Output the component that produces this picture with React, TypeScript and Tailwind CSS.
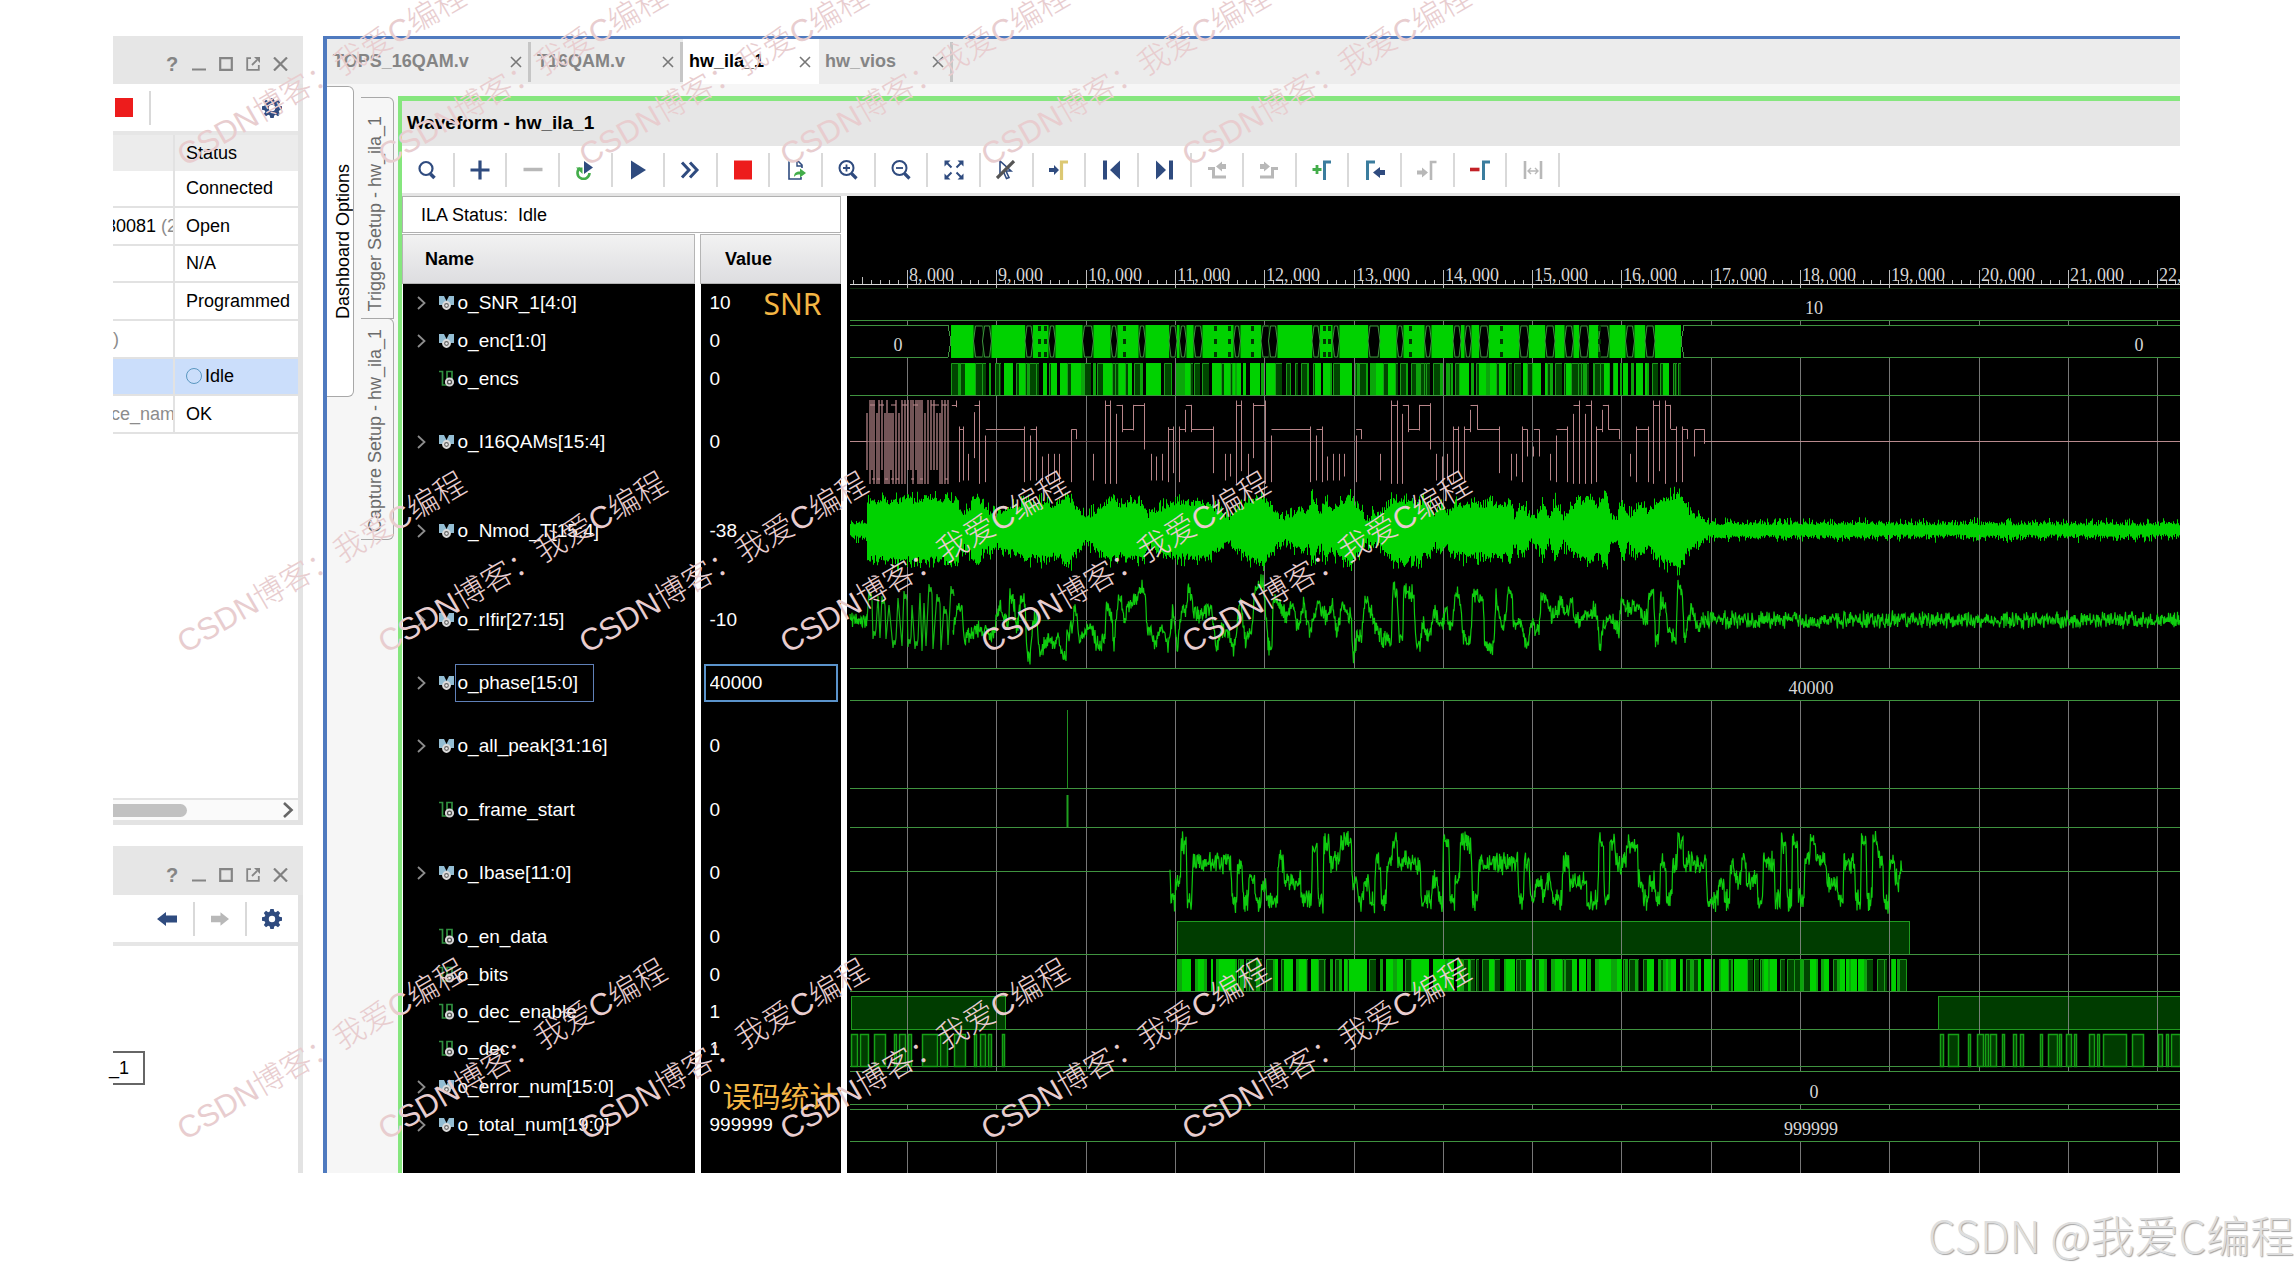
import React from "react";

/* ---------- deterministic noise for the captured samples ---------- */
function makeRandom(seed: number) {
  let s = seed;
  return () => {
    s = (s * 1664525 + 1013904223) % 4294967296;
    return s / 4294967296;
  };
}

type Pt = [number, number];

function sample(points: Pt[], x: number) {
  let i = 0;
  while (i < points.length - 2 && points[i + 1][0] <= x) i++;
  const [x0, y0] = points[i];
  const [x1, y1] = points[i + 1];
  const t = Math.min(1, Math.max(0, (x - x0) / (x1 - x0 || 1)));
  return y0 + (y1 - y0) * t;
}

function noisyTrace(points: Pt[], from: number, to: number, noise: number, seed: number) {
  const r = makeRandom(seed);
  let d = "";
  for (let x = from; x <= to; x += 0.5) {
    const y = sample(points, x) + (r() + r() - 1) * noise;
    d += (d ? "L" : "M") + x + " " + y.toFixed(1);
  }
  return d;
}

const third = (pts: Pt[], ox: number, oy: number): Pt[] => pts.map(([x, y]) => [ox + x / 3, oy + y / 3]);

/* ---------- modulated signal envelope ---------- */
const ENVELOPE: Pt[] = [
  [850, 7], [866, 8], [867, 29], [955, 31], [958, 30], [960, 16], [970, 20], [973, 32], [979, 32], [982, 22], [995, 16], [1010, 22],
  [1028, 30], [1035, 26], [1040, 30], [1050, 25], [1060, 28], [1066, 36], [1075, 24], [1086, 13], [1100, 21], [1110, 32],
  [1118, 26], [1143, 28], [1148, 16], [1160, 22], [1175, 27], [1200, 28], [1222, 19], [1228, 12], [1240, 22], [1250, 30],
  [1265, 31], [1275, 17], [1285, 12], [1295, 16], [1300, 22], [1308, 18], [1312, 32], [1320, 13], [1325, 32], [1330, 20],
  [1350, 34], [1358, 22], [1366, 12], [1380, 16], [1392, 30], [1410, 30], [1430, 25], [1434, 14], [1440, 24], [1447, 16],
  [1452, 24], [1470, 26], [1506, 26], [1510, 32], [1514, 14], [1522, 26], [1530, 12], [1536, 14], [1543, 28], [1549, 12],
  [1555, 28], [1563, 13], [1575, 26], [1588, 32], [1598, 24], [1606, 38], [1610, 14], [1617, 12], [1622, 28], [1628, 14],
  [1640, 26], [1648, 16], [1655, 28], [1668, 32], [1680, 36], [1688, 18], [1700, 13], [1708, 7], [2180, 6],
];

function envelopePath() {
  const r = makeRandom(11);
  const top: string[] = [];
  const bottom: string[] = [];
  const edge = (a: number) => {
    const spike = r() > 0.65 ? r() * (a > 10 ? 9 : 5) : 0;
    return a - (a > 10 ? 4 : 2) + r() * (a > 10 ? 7 : 4) + spike;
  };
  for (let x = 850; x <= 2180; x++) {
    const a = sample(ENVELOPE, x);
    const up = (530 - edge(a)).toFixed(1);
    const down = (530 + edge(a)).toFixed(1);
    top.push(x + " " + up, x + 1 + " " + up);
    bottom.push(x + " " + down, x + 1 + " " + down);
  }
  return "M" + top.join("L") + "L" + bottom.reverse().join("L") + "Z";
}

/* ---------- filtered baseband ---------- */
const FIR_A: Pt[] = [
  [340, 995], [350, 930], [365, 920], [372, 1020], [385, 1010], [395, 990], [420, 985], [440, 1000], [455, 1020], [468, 960],
  [480, 920], [490, 945], [505, 960], [510, 880], [520, 890], [530, 990], [545, 880], [555, 900], [560, 1060], [570, 1070],
  [580, 960], [590, 960], [600, 1070], [612, 1035], [625, 1020], [640, 1040], [655, 1015], [665, 1060], [678, 1080], [682, 1000],
  [695, 980], [705, 910], [720, 1020], [735, 1000], [750, 970], [765, 1020], [780, 1035], [795, 1020], [800, 920], [812, 925],
  [822, 1030], [835, 900], [845, 910], [852, 965], [865, 910], [885, 900], [900, 870], [915, 870], [922, 980], [935, 1000],
  [945, 1030], [960, 980], [975, 1000], [985, 1035], [1000, 925], [1012, 1050], [1025, 930], [1038, 930], [1045, 860], [1060, 930],
  [1075, 950], [1100, 930], [1115, 930], [1130, 1050], [1145, 980], [1160, 990], [1180, 1045], [1190, 1000], [1200, 880],
  [1215, 1020], [1235, 1000], [1245, 860], [1270, 850], [1285, 1040], [1295, 1050], [1300, 880], [1320, 920], [1340, 950],
  [1360, 920], [1375, 990], [1390, 910], [1410, 1000], [1425, 930],
];
const FIR_B: Pt[] = [
  [0, 920], [20, 950], [38, 915], [50, 995], [68, 910], [80, 940], [92, 940], [100, 1070], [110, 1010], [125, 1010], [135, 900],
  [145, 910], [160, 960], [180, 1010], [200, 1020], [214, 1020], [218, 870], [230, 870], [238, 1010], [248, 1000], [252, 870],
  [280, 880], [288, 1020], [300, 1030], [310, 970], [325, 1020], [345, 930], [360, 990], [378, 930], [395, 990], [405, 885],
  [418, 890], [430, 1010], [450, 1030], [458, 890], [488, 880], [494, 1035], [522, 1040], [528, 890], [545, 970], [558, 960],
  [565, 870], [576, 880], [580, 980], [605, 960], [612, 1030], [622, 1040], [635, 970], [658, 1000], [663, 880], [680, 900],
  [690, 940], [705, 945], [722, 905], [738, 950], [755, 900], [770, 970], [785, 950], [800, 940], [828, 930], [840, 1045],
  [850, 980], [865, 950], [880, 960], [898, 1000], [903, 890], [920, 930], [945, 910], [960, 930], [982, 960], [987, 880],
  [1000, 880], [1006, 1020], [1016, 1010], [1022, 900], [1035, 920], [1045, 990], [1068, 1020], [1073, 860], [1086, 860],
  [1092, 1020], [1115, 920], [1135, 990], [1145, 960], [1150, 957],
];

/* rapid swings at the start of the frame */
function firBurstPath() {
  const r = makeRandom(5);
  let d = "M867 620";
  let high = false;
  for (let x = 869; x < 953; x += 2 + Math.floor(r() * 3)) {
    high = !high;
    const y = high ? 584 + r() * 24 : 654 - r() * 18;
    d += `L${x} ${y.toFixed(0)}`;
    if (r() > 0.6) {
      d += `l1 ${high ? 8 : -8}l1 ${high ? -5 : 5}l1 ${high ? 7 : -7}`;
      x += 2;
    }
  }
  return d;
}

/* ---------- demodulated baseband ---------- */
const BASE_A: Pt[] = [
  [90, 574], [92, 660], [104, 663], [106, 605], [121, 603], [124, 490], [138, 490], [142, 665], [155, 665], [158, 545], [272, 547],
  [276, 665], [290, 665], [293, 550], [306, 558], [312, 665], [323, 665], [328, 605], [342, 605], [348, 665], [362, 670],
  [366, 610], [378, 610], [382, 670], [412, 660], [415, 545], [430, 543], [433, 605], [482, 605], [486, 660], [515, 660],
  [518, 485], [531, 490], [535, 660], [549, 665], [552, 485], [566, 490], [570, 547], [598, 543], [602, 488], [634, 485],
  [637, 605], [652, 605], [656, 660], [668, 665], [673, 605], [686, 605], [691, 665], [704, 665], [707, 548], [721, 550],
  [724, 665], [738, 665], [741, 545], [756, 545], [758, 485], [771, 485], [774, 550], [840, 550], [844, 665], [875, 665],
  [878, 600], [891, 600], [895, 665], [908, 665], [910, 480], [927, 485], [930, 665], [943, 665], [947, 600], [958, 600],
  [961, 490], [993, 490], [998, 665], [1013, 665], [1016, 550], [1133, 547], [1137, 665], [1150, 665], [1153, 547],
  [1168, 550], [1171, 665], [1184, 665], [1187, 605],
];
const BASE_B: Pt[] = [
  [2, 245], [10, 300], [17, 245], [27, 240], [30, 300], [53, 300], [56, 185], [69, 185], [71, 245], [111, 245], [114, 305],
  [139, 305], [142, 130], [153, 130], [155, 300], [167, 300], [169, 130], [181, 130], [183, 190], [207, 190], [209, 130],
  [235, 130], [237, 240], [247, 245], [250, 305], [262, 305], [264, 245], [276, 245], [280, 305], [289, 300], [291, 180],
  [303, 185], [306, 300], [318, 300], [320, 190], [330, 190], [332, 125], [345, 125], [347, 190], [401, 185], [403, 300],
  [429, 300], [431, 245], [443, 245], [446, 300], [457, 300], [459, 190], [469, 190], [471, 245], [483, 245], [485, 190],
  [496, 190], [498, 245], [523, 240], [526, 305], [537, 305], [539, 185], [565, 185], [567, 300], [580, 305], [582, 128],
  [594, 130], [596, 300], [607, 300], [609, 128], [621, 130], [623, 300], [637, 300], [639, 180], [650, 180], [652, 130],
  [664, 130], [666, 185], [690, 185], [692, 250], [717, 250], [719, 300], [731, 305], [733, 185], [759, 185], [761, 305],
  [773, 305], [775, 123], [787, 125], [789, 300], [801, 300], [803, 123], [814, 125], [817, 185], [827, 185], [829, 310],
  [841, 310], [843, 185], [854, 185], [858, 240], [867, 245], [869, 190], [873, 214],
];
const BASE: Pt[] = [...third(BASE_A, 1140, 680), ...BASE_B.map(([x, y]): Pt => [1540 + x / 2.412, 800 + y / 3])];

/* ---------- 16QAM symbols ---------- */
type Seg = [number, number, number];
const QAM_V_A: Seg[] = [
  [348, 300, 320], [357, 378, 545], [368, 378, 540], [384, 460, 540], [401, 335, 473], [418, 300, 550], [434, 405, 545],
  [553, 378, 545], [570, 405, 540], [588, 378, 540], [606, 468, 545], [625, 460, 545], [641, 460, 545], [658, 460, 545],
  [692, 388, 545], [709, 388, 416], [760, 460, 540], [795, 300, 550], [811, 300, 550], [828, 340, 550], [847, 313, 395],
  [880, 313, 390], [913, 308, 447], [932, 460, 540], [949, 468, 540], [967, 460, 540], [985, 380, 545], [1000, 378, 518],
  [1018, 378, 545], [1036, 328, 395], [1054, 313, 395], [1120, 378, 518], [1154, 460, 540], [1170, 460, 528], [1189, 300, 550],
  [1204, 300, 512], [1223, 460, 545], [1239, 308, 473], [1276, 300, 550], [1293, 405, 545], [1411, 378, 545], [1428, 405, 540],
];
const QAM_V_B: Seg[] = [
  [7, 378, 545], [22, 468, 540], [40, 460, 540], [56, 460, 540], [73, 460, 528], [107, 405, 545], [124, 388, 416],
  [179, 460, 540], [213, 300, 550], [230, 300, 550], [247, 340, 550], [265, 313, 395], [298, 313, 390], [331, 308, 447],
  [348, 460, 540], [366, 468, 540], [382, 460, 540], [400, 378, 545], [415, 378, 518], [433, 378, 545], [450, 328, 395],
  [472, 313, 388], [538, 378, 518], [572, 460, 540], [588, 460, 528], [607, 378, 545], [622, 388, 468], [639, 438, 468],
  [658, 388, 468], [690, 460, 540], [708, 405, 545], [742, 378, 545], [759, 340, 550], [776, 300, 550], [796, 340, 550],
  [813, 300, 550], [829, 378, 545], [847, 328, 395], [865, 313, 388], [898, 388, 416], [931, 460, 528], [949, 378, 545],
  [984, 378, 545], [1000, 300, 550], [1017, 300, 512], [1035, 300, 550], [1051, 313, 385], [1069, 378, 545], [1085, 378, 545],
  [1102, 388, 416], [1122, 388, 468], [1153, 388, 430],
];
const QAM_H_A: Seg[] = [
  [334, 348, 316], [357, 368, 388], [402, 418, 316], [436, 553, 388], [570, 588, 388], [692, 709, 388], [795, 811, 316],
  [828, 847, 316], [847, 880, 388], [880, 913, 316], [985, 1000, 388], [1018, 1036, 388], [1036, 1054, 316], [1054, 1120, 388],
  [1189, 1204, 316], [1239, 1276, 316], [1293, 1411, 388], [1428, 1447, 388],
];
const QAM_H_B: Seg[] = [
  [107, 124, 388], [213, 230, 316], [247, 265, 316], [265, 298, 388], [298, 331, 316], [400, 415, 388], [433, 450, 388],
  [450, 472, 316], [472, 538, 388], [607, 622, 388], [640, 658, 388], [708, 742, 388], [759, 776, 316], [796, 813, 316],
  [829, 847, 388], [847, 865, 316], [865, 898, 388], [949, 984, 388], [1000, 1017, 316], [1035, 1051, 316], [1051, 1069, 388],
  [1085, 1102, 388], [1122, 1153, 388],
];

function qamPath() {
  let d = "";
  const v = (list: Seg[], ox: number) =>
    list.forEach(([x, a, b]) => (d += `M${Math.round(ox + x / 3)} ${300 + a / 3}V${300 + b / 3}`));
  const h = (list: Seg[], ox: number) =>
    list.forEach(([a, b, y]) => (d += `M${ox + a / 3} ${Math.round(300 + y / 3)}H${ox + b / 3}`));
  v(QAM_V_A, 840);
  v(QAM_V_B, 1320);
  h(QAM_H_A, 840);
  h(QAM_H_B, 1320);
  return d;
}

function burstPath() {
  const r = makeRandom(21);
  let d = "";
  for (let x = 867; x < 951; x += r() > 0.45 ? 2 : 3) {
    const a = r() > 0.3 ? 400 : 413;
    const b = r() > 0.35 ? 484 : 470;
    d += `M${x} ${a}V${b}`;
    if (r() > 0.7) d += `M${x} 405h5`;
    if (r() > 0.7) d += `M${x} 479h3`;
  }
  return d;
}

/* ---------- logic rows ---------- */
type Bar = { x: number; w: number; kind: number };
function denseBars(from: number, to: number, seed: number, dark: number): Bar[] {
  const r = makeRandom(seed);
  for (let i = 0; i < 8; i++) r();
  const out: Bar[] = [];
  let x = from;
  let last = 0;
  while (x < to) {
    const k = r();
    let kind = k < 0.3 ? 0 : k < 0.3 + dark ? 1 : k < 0.58 + dark ? 3 : 2;
    if (kind === 0 && last === 0) kind = 1;
    const w = kind === 0 ? 1 + Math.floor(r() * 4) : kind === 2 ? 1 + Math.floor(r() * 3) : 2 + Math.floor(r() * 6);
    out.push({ x, w: Math.min(w, to - x), kind });
    x += w;
    last = kind;
  }
  return out;
}
const ENCS = denseBars(951, 1681, 7, 0.2);
const BITS = denseBars(1177, 1907, 42, 0.16);
const BAR_FILL = ["#000000", "#004600", "#0ba50b", "#00d200"];

const pulses = (list: Pt[], ox: number, k: number): Pt[] => list.map(([a, b]) => [ox + a / k, ox + b / k]);
const DEC: Pt[] = [
  ...pulses(
    [[33, 54], [60, 88], [102, 138], [162, 170], [177, 197], [203, 215], [247, 294], [301, 326], [343, 379], [402, 410], [420, 437], [444, 455], [487, 497]],
    840, 3,
  ),
  ...pulses(
    [[965, 974], [985, 1012], [1033, 1041], [1053, 1069], [1073, 1083], [1086, 1104], [1115, 1122], [1142, 1152], [1158, 1167], [1207, 1215], [1226, 1249], [1253, 1261], [1268, 1282], [1287, 1295], [1323, 1338], [1343, 1350], [1357, 1415], [1427, 1456], [1490, 1502], [1510, 1517], [1523, 1548]],
    1540, 2.412,
  ),
];

/* transitions of the encoded bus: [centre, width] and narrow glitches */
const EYES: Pt[] = [
  [979, 9], [987, 7], [1029, 6], [1052, 5], [1088, 9], [1114, 5], [1142, 5], [1173, 6], [1183, 5], [1198, 7], [1237, 5],
  [1266, 8], [1273, 7], [1316, 6], [1336, 5], [1374, 10], [1400, 5], [1428, 5], [1457, 6], [1468, 5], [1484, 8], [1524, 8],
  [1550, 8], [1569, 7], [1584, 8], [1604, 9], [1630, 7], [1650, 8],
];
const GLITCHES = [1039, 1045, 1124, 1215, 1229, 1252, 1324, 1329, 1410, 1501, 1599];

const GRID_X = Array.from({ length: 15 }, (_, i) => Math.round(907 + i * 89.3));
const TICKS = Array.from({ length: 149 }, (_, i) => i - 6).filter((i) => i % 10 !== 0);
const GRID_SPANS: Pt[] = [[320, 325], [357, 668], [701, 1071], [1104, 1109], [1141, 1173]];

const QAM = qamPath();
const BURST = burstPath();
const ENV = envelopePath();
const FIR_PTS: Pt[] = [...third(FIR_A, 840, 300), ...third(FIR_B, 1320, 300)];
const FIR_BURST = firBurstPath();
const FIR = noisyTrace(FIR_PTS, 953, 1703, 11, 4);
const FIR_LEAD = noisyTrace([[850, 620], [867, 620]], 850, 867, 9, 9);
const FIR_TAIL = noisyTrace([[1703, 620], [2180, 620]], 1703, 2180, 10, 8);
const IBASE = noisyTrace(BASE, 1170, 1902, 13, 15);

function WaveCanvas() {
  return (
    <svg width="1333" height="977" viewBox="847 196 1333 977" className="block" role="img" aria-label="Captured waveforms">
      {/* ruler */}
      <g stroke="#bdbdbd" shapeRendering="crispEdges">
        <path d="M850 284.5H2180" stroke="#d9d9d9" />
        <path d={GRID_X.map((x) => `M${x}.5 270V288`).join("")} />
        <path d={TICKS.map((i) => `M${Math.round(907 + i * 8.93)}.5 284V${Math.abs(i % 10) === 5 ? 277 : 280}`).join("")} />
      </g>
      <g fill="#d6d6d6" fontFamily="Liberation Serif, serif" fontSize="18">
        {GRID_X.map((x, i) => (
          <text key={x} x={x + 2} y="281">{`${i + 8}, 000`}</text>
        ))}
      </g>
      <path d="M850 288.5H2180" stroke="#0c2a0c" />

      {/* level-high fills */}
      <g fill="#003c00" stroke="#1f9a1f">
        <rect x="1177.5" y="921.5" width="732" height="33" />
        <rect x="851.5" y="996.5" width="154" height="33" />
        <rect x="1938.5" y="996.5" width="250" height="33" />
      </g>

      <path
        d={GRID_X.map((x) => GRID_SPANS.map(([a, b]) => `M${x}.5 ${a}V${b}`).join("")).join("")}
        stroke="#8c8c8c"
        opacity="0.85"
      />

      {/* baselines and bus outlines */}
      <g stroke="#3f933f" fill="none" shapeRendering="crispEdges">
        <path d="M850 320.5H2180M850 325.5H948L951 341L948 357.5H850M2180 325.5H1684L1681 341L1684 357.5H2180M850 395.5H2180" />
        <path d="M850 668.5H2180M850 700.5H2180M850 788.5H2180M850 827.5H2180" />
        <path d="M850 871.5H1170M1902 871.5H2180M850 954.5H2180M850 991.5H2180M1006 1029.5H1938M850 1066.5H2180" />
        <path d="M850 1071.5H2180M850 1104.5H2180M850 1109.5H2180M850 1141.5H2180" />
        <path d="M1170 871.5H1902M867 620.5H1703" stroke="#1c5a1c" />
      </g>

      {/* encoded bus */}
      <rect x="951" y="325" width="730" height="33" fill="#00d200" />
      {EYES.map(([x, w]) => (
        <g key={x}>
          <rect x={x - w / 2 - 1} y="325" width={w + 2} height="33" fill="#003000" />
          <path
            d={`M${x - w / 2 + 1} 326H${x + w / 2 - 1}L${x + w / 2 + 1} 341L${x + w / 2 - 1} 357H${x - w / 2 + 1}L${x - w / 2 - 1} 341Z`}
            fill="#000"
            stroke="#3f933f"
          />
        </g>
      ))}
      <g fill="#003800">
        {GLITCHES.map((x) => (
          <path key={x} d={`M${x - 1} 326h3v5h-3zM${x - 1} 339h3v5h-3zM${x - 1} 352h3v5h-3z`} />
        ))}
      </g>

      {/* serial rows */}
      <g shapeRendering="crispEdges">
        {ENCS.filter((b) => b.kind > 0).map((b) => (
          <rect key={b.x} x={b.x} y="363" width={b.w} height="32" fill={BAR_FILL[b.kind]} />
        ))}
        {BITS.filter((b) => b.kind > 0).map((b) => (
          <rect key={b.x} x={b.x} y="959" width={b.w} height="32" fill={BAR_FILL[b.kind]} />
        ))}
      </g>
      <g fill="none" stroke="#1a9a1a">
        {ENCS.filter((b) => b.kind === 1).map((b) => (
          <path key={b.x} d={`M${b.x}.5 395V363.5H${b.x + b.w}`} />
        ))}
        {BITS.filter((b) => b.kind === 1).map((b) => (
          <path key={b.x} d={`M${b.x}.5 991V959.5H${b.x + b.w}`} />
        ))}
      </g>
      <g fill="#003c00" stroke="#16a016" strokeWidth="1.500">
        {DEC.map(([a, b]) => (
          <rect key={a} x={Math.round(a) + 0.5} y="1034.5" width={Math.round(b - a) - 1} height="32" />
        ))}
      </g>

      {/* symbols */}
      <path d="M867 441.5H1704" stroke="#6d4c4f" />
      <path d="M850 441.5H867M1704 441.5H2180" stroke="#b98a8d" />
      <path d={QAM} stroke="#b88589" fill="none" transform="translate(0.5 0.5)" />
      <path d={BURST} stroke="#c08d91" fill="none" strokeWidth="1.200" />

      <path d={ENV} fill="#00d200" />
      <path d={FIR_BURST} stroke="#14b414" fill="none" strokeWidth="1.200" />
      <g stroke="#0fcc0f" fill="none" strokeWidth="1.200">
        <path d={FIR_LEAD} />
        <path d={FIR} />
        <path d={FIR_TAIL} />
        <path d={IBASE} />
      </g>

      {/* correlation peak and frame marker */}
      <path d="M1067.5 710V788" stroke="#1f8f1f" />
      <path d="M1067.5 795V827" stroke="#1fa01f" strokeWidth="2" />

      <g fill="#d6d6d6" fontFamily="Liberation Serif, serif" fontSize="18" textAnchor="middle">
        <text x="1814" y="314">10</text>
        <text x="898" y="351">0</text>
        <text x="2139" y="351">0</text>
        <text x="1811" y="694">40000</text>
        <text x="1814" y="1098">0</text>
        <text x="1811" y="1135">999999</text>
      </g>
    </svg>
  );
}

/* ---------- icons ---------- */
const NAVY = "#2f4b7f";
const GRAY = "#b8b8b8";
const TEAL = "#3b7d9e";

function Icon({ children }: { children: React.ReactNode }) {
  return (
    <svg width="20" height="20" viewBox="0 0 20 20" fill="none" aria-hidden="true">
      {children}
    </svg>
  );
}

const ARROW_R = "M0 8h5V5l5 5-5 5v-3H0z";

const TOOLS: [string, React.ReactNode][] = [
  ["Search", <><circle cx="9" cy="8.500" r="6.500" stroke={NAVY} strokeWidth="2.200" /><path d="M13.500 14l4 4" stroke={NAVY} strokeWidth="3.500" /></>],
  ["Add", <path d="M10 0.500v19M0.500 10h19" stroke={NAVY} strokeWidth="3.200" />],
  ["Remove", <path d="M0.500 9.500h19" stroke={GRAY} strokeWidth="3.500" />],
  ["Run trigger repeatedly", <><path d="M5 8a6 6 0 1 0 9.500 5" stroke="#43ad4a" strokeWidth="2.600" /><path d="M1 7.500h6.500V14z" fill="#43ad4a" /><path d="M9 1l9 6.500L9 14z" fill={NAVY} /></>],
  ["Run trigger", <path d="M3 0.500L18 10 3 19.500z" fill={NAVY} />],
  ["Run immediate", <path d="M2 2.500L9 10l-7 7.500M10 2.500l7 7.500-7 7.500" stroke={NAVY} strokeWidth="3" />],
  ["Stop", <path d="M1 0.500h18v19H1z" fill="#ed1c1c" />],
  ["Export", <><path d="M16 8V5l-4-4H3v18h12v-2" stroke={NAVY} strokeWidth="1.600" /><path d="M11 1v5h5" stroke={NAVY} strokeWidth="1.400" /><path d="M8 17c0-4 2-5.500 6-5.500V8.500l6 4.500-6 4.500v-3c-3 0-4.500.5-6 2.500z" fill="#43ad4a" /></>],
  ["Zoom in", <><circle cx="8.500" cy="8" r="7" stroke={NAVY} strokeWidth="2" /><path d="M8.500 4.500v7M5 8h7" stroke={NAVY} strokeWidth="1.800" /><path d="M13.500 13.500l5 5" stroke={NAVY} strokeWidth="3.200" /></>],
  ["Zoom out", <><circle cx="8.500" cy="8" r="7" stroke={NAVY} strokeWidth="2" /><path d="M5 8h7" stroke={NAVY} strokeWidth="1.800" /><path d="M13.500 13.500l5 5" stroke={NAVY} strokeWidth="3.200" /></>],
  ["Zoom fit", <><path d="M2 2l5.500 5.500M18 2l-5.500 5.500M2 18l5.500-5.500M18 18l-5.500-5.500" stroke={NAVY} strokeWidth="2" /><path d="M0.500 0.500h6l-6 6zM19.500 0.500h-6l6 6zM0.500 19.500h6l-6-6zM19.500 19.500h-6l6-6z" fill={NAVY} /></>],
  ["Cursor off", <><path d="M4 1v14l3.500-3 3 6.500 2.500-1-3-6.500H15z" stroke={NAVY} strokeWidth="1.600" /><path d="M1 18L18 1" stroke="#555" strokeWidth="3.200" /></>],
  ["Go to cursor", <><path d={ARROW_R} fill={NAVY} /><path d="M12.500 20V2H19" stroke="#dcc873" strokeWidth="3.200" /></>],
  ["Go to start", <><path d="M3 0.500v19" stroke={NAVY} strokeWidth="4" /><path d="M18 0.500v19L8 10z" fill={NAVY} /></>],
  ["Go to end", <><path d="M17 0.500v19" stroke={NAVY} strokeWidth="4" /><path d="M2 0.500v19L12 10z" fill={NAVY} /></>],
  ["Previous transition", <><path d="M1 8.500h5.500V17H19" stroke={GRAY} strokeWidth="3" /><path d="M19 4v5h-4v2.500L9 6.500l6-5V4z" fill={GRAY} /></>],
  ["Next transition", <><path d="M19 8.500h-5.500V17H1" stroke={GRAY} strokeWidth="3" /><path d="M1 4v5h4v2.500l6-5-6-5V4z" fill={GRAY} /></>],
  ["Add marker", <><path d="M5 5v9M0.500 9.500h9" stroke="#43ad4a" strokeWidth="2.800" /><path d="M12.500 20V2H19" stroke={TEAL} strokeWidth="3" /></>],
  ["Previous marker", <><path d="M2.500 20V2H10" stroke={TEAL} strokeWidth="3" /><path d="M20 10v5h-5v3l-7-5.500L15 7v3z" fill={NAVY} /></>],
  ["Next marker", <><path d="M0 10.500h5v-3l6 5-6 5v-3H0z" fill={GRAY} /><path d="M14 20V2h5.500" stroke={GRAY} strokeWidth="2.600" /></>],
  ["Remove marker", <><path d="M0 9.500h9.500" stroke="#c32127" strokeWidth="3.600" /><path d="M13.500 20V2H20" stroke={TEAL} strokeWidth="3" /></>],
  ["Swap cursors", <><path d="M2 1v18M18 1v18" stroke={GRAY} strokeWidth="2.600" /><path d="M5 11h10M8 8l-3 3 3 3M12 8l3 3-3 3" stroke={GRAY} strokeWidth="1.400" /></>],
];

function Gear() {
  return (
    <Icon>
      <path
        d="M8.300 0h3.400l.5 2.600 1.600.7L16 1.800 18.200 4l-1.500 2.200.7 1.600 2.600.5v3.400l-2.600.5-.7 1.600 1.500 2.200-2.200 2.200-2.200-1.500-1.600.7-.5 2.600H8.300l-.5-2.600-1.600-.7L4 18.200 1.800 16l1.500-2.200-.7-1.600L0 11.700V8.300l2.600-.5.7-1.600L1.800 4 4 1.800l2.200 1.500 1.600-.7zM10 6.800a3.200 3.200 0 1 0 0 6.400 3.200 3.200 0 0 0 0-6.400z"
        fill={NAVY}
      />
    </Icon>
  );
}

function BusIcon() {
  return (
    <svg width="17" height="16" viewBox="0 0 17 16" aria-hidden="true">
      <path d="M1 1h5l2.500 5L11 1h5v9h-3l-2 2H6l-2-2H1z" fill="#93bdd3" />
      <circle cx="8.500" cy="10.500" r="3.400" fill="#666" stroke="#dcdcdc" strokeWidth="2" />
      <circle cx="8.500" cy="10.500" r="1.200" fill="#eee" />
    </svg>
  );
}

function BitIcon() {
  return (
    <svg width="17" height="18" viewBox="0 0 17 18" aria-hidden="true" fill="none">
      <path d="M1 1.500h3.500V15H9V1.500h5V9" stroke="#2f8f3f" strokeWidth="1.700" />
      <circle cx="11.500" cy="12" r="3.600" fill="#555" stroke="#d6d6d6" strokeWidth="2" />
      <circle cx="11.500" cy="12" r="1.300" fill="#eee" />
    </svg>
  );
}

function CloseX() {
  return (
    <svg width="12" height="12" viewBox="0 0 12 12" aria-hidden="true">
      <path d="M1 1l10 10M11 1L1 11" stroke="#777" strokeWidth="1.600" />
    </svg>
  );
}

function WindowButtons() {
  const b = "flex h-4 w-4 items-center justify-center";
  return (
    <div className="flex items-center gap-[11px] pr-[14px] pt-2 text-[#858585]">
      <button aria-label="Help" className={`${b} text-[20px] font-bold leading-4`}>?</button>
      <button aria-label="Minimize" className={b}>
        <svg width="14" height="16" viewBox="0 0 14 16"><path d="M0 13.500h14" stroke="#858585" strokeWidth="2" /></svg>
      </button>
      <button aria-label="Maximize" className={b}>
        <svg width="14" height="14" viewBox="0 0 14 14"><path d="M1.200 1.200h11.600v11.600H1.200z" stroke="#858585" strokeWidth="2.200" fill="none" /></svg>
      </button>
      <button aria-label="Float" className={b}>
        <svg width="14" height="14" viewBox="0 0 14 14" fill="none"><path d="M5 1.200H1.200v11.600h11.600V8M6 8l5-5" stroke="#858585" strokeWidth="1.800" /><path d="M8 0h6v6z" fill="#858585" /></svg>
      </button>
      <button aria-label="Close" className={b}>
        <svg width="15" height="14" viewBox="0 0 15 14"><path d="M1 0.500l13 13M14 0.500l-13 13" stroke="#808080" strokeWidth="2.200" /></svg>
      </button>
    </div>
  );
}

/* ---------- left column ---------- */
const STATUS_ROWS: { left: React.ReactNode; status: React.ReactNode; selected?: boolean }[] = [
  { left: "", status: "Connected" },
  { left: <span className="-ml-[7px]">30081 <span className="text-[#8c8c8c]">(2</span></span>, status: "Open" },
  { left: "", status: "N/A" },
  { left: "", status: "Programmed" },
  { left: <span className="text-[#8c8c8c]">)</span>, status: "" },
  {
    left: "",
    status: (
      <span className="flex items-center gap-[3px]">
        <span className="h-4 w-4 rounded-full border border-[#5a97c0]" />
        Idle
      </span>
    ),
    selected: true,
  },
  { left: <span className="-ml-[2px] text-[#8c8c8c]">ce_name</span>, status: "OK" },
];

function HardwarePanel() {
  return (
    <section className="flex h-[789px] flex-col border-b-[5px] border-r-[5px] border-[#e3e3e3] bg-white">
      <header className="-mr-[5px] flex h-12 items-center justify-end bg-[#e6e6e6] pr-[1px]">
        <WindowButtons />
      </header>
      <div className="flex h-[47px] items-center">
        <button aria-label="Stop" className="ml-[2px] h-[19px] w-[18px] bg-[#ed1c1c]" />
        <span className="ml-4 h-[34px] w-[2px] bg-[#d9d9d9]" />
        <button aria-label="Settings" className="ml-auto mr-4"><Gear /></button>
      </div>
      <table className="h-[303px] w-full table-fixed border-collapse border-t-4 border-[#e6e6e6] text-left text-[18px] leading-5">
        <thead>
          <tr className="h-[38px] bg-[#ececec]">
            <th aria-label="Name" className="w-[61px] border-r-2 border-[#e2e2e2]" />
            <th className="pl-[11px] font-normal">Status</th>
          </tr>
        </thead>
        <tbody>
          {STATUS_ROWS.map((r, i) => (
            <tr key={i} className={r.selected ? "border-b-2 border-[#e2e2e2] bg-[#cbdefb]" : "border-b-2 border-[#e2e2e2]"}>
              <td className="overflow-hidden whitespace-nowrap border-r-2 border-[#e2e2e2]">{r.left}</td>
              <td className="whitespace-nowrap pl-[11px]">{r.status}</td>
            </tr>
          ))}
        </tbody>
      </table>
      <div className="mt-auto flex h-[22px] items-center border-t-2 border-[#e3e3e3] bg-[#fafafa]">
        <span className="h-[13px] w-[74px] rounded-r-full bg-[#c1c1c1]" />
        <button aria-label="Scroll right" className="ml-auto mr-1">
          <svg width="12" height="16" viewBox="0 0 12 16" fill="none"><path d="M2 1l7.500 7L2 15" stroke="#666" strokeWidth="2.600" /></svg>
        </button>
      </div>
    </section>
  );
}

function PropertiesPanel() {
  return (
    <section className="flex flex-1 flex-col border-r-[5px] border-[#e3e3e3] bg-white">
      <header className="-mr-[5px] flex h-[49px] items-center justify-end bg-[#e6e6e6] pr-[1px]">
        <WindowButtons />
      </header>
      <div className="flex h-[51px] items-center justify-end border-b-4 border-[#e6e6e6] pr-4">
        <button aria-label="Back"><svg width="20" height="14" viewBox="0 0 20 14"><path d="M20 3.500v7h-11V14L0 7l9-7v3.500z" fill={NAVY} /></svg></button>
        <span className="ml-4 h-[34px] w-[2px] bg-[#d9d9d9]" />
        <button aria-label="Forward" className="ml-4"><svg width="18" height="14" viewBox="0 0 19 14"><path d="M0 3.500v7h10V14l9-7-9-7v3.500z" fill={GRAY} /></svg></button>
        <span className="ml-4 h-[34px] w-[2px] bg-[#d9d9d9]" />
        <button aria-label="Settings" className="ml-[15px]"><Gear /></button>
      </div>
      <div className="mt-[105px] flex h-[34px] w-8 items-center border-2 border-l-0 border-[#666] text-[18px]">
        <span className="-ml-[4px]">_1</span>
      </div>
    </section>
  );
}

/* ---------- signal table ---------- */
type Signal = { name: string; value: string; bus: boolean; tall?: boolean; selected?: boolean; note?: string };
const SIGNALS: Signal[] = [
  { name: "o_SNR_1[4:0]", value: "10", bus: true, note: "SNR" },
  { name: "o_enc[1:0]", value: "0", bus: true },
  { name: "o_encs", value: "0", bus: false },
  { name: "o_I16QAMs[15:4]", value: "0", bus: true, tall: true },
  { name: "o_Nmod_T[15:4]", value: "-38", bus: true, tall: true },
  { name: "o_rIfir[27:15]", value: "-10", bus: true, tall: true },
  { name: "o_phase[15:0]", value: "40000", bus: true, selected: true },
  { name: "o_all_peak[31:16]", value: "0", bus: true, tall: true },
  { name: "o_frame_start", value: "0", bus: false },
  { name: "o_Ibase[11:0]", value: "0", bus: true, tall: true },
  { name: "o_en_data", value: "0", bus: false },
  { name: "o_bits", value: "0", bus: false },
  { name: "o_dec_enable", value: "1", bus: false },
  { name: "o_dec", value: "1", bus: false },
  { name: "o_error_num[15:0]", value: "0", bus: true, note: "误码统计" },
  { name: "o_total_num[19:0]", value: "999999", bus: true },
];

function SignalTable() {
  return (
    <table className="w-full table-fixed border-collapse text-left text-[19px] leading-6 text-white">
      <thead>
        <tr className="h-[49px] bg-linear-to-b from-[#f2f2f2] to-[#dddde0] text-[18px] text-black">
          <th className="w-[292px] border border-[#b5b5b5] pl-[22px] font-bold">Name</th>
          <th aria-hidden="true" className="w-[6px] bg-white" />
          <th className="border border-[#b5b5b5] pl-6 font-bold">Value</th>
        </tr>
      </thead>
      <tbody>
        {SIGNALS.map((s, i) => (
          <tr key={s.name} className={s.tall ? "h-[89px]" : i === 12 || i === 13 || i === 6 ? "h-[37px]" : "h-[38px]"}>
            <td className="bg-black p-0">
              <div className="flex items-center pl-[14px]">
                {s.bus ? (
                  <button aria-label={`Expand ${s.name}`} className="w-[21px]">
                    <svg width="9" height="14" viewBox="0 0 9 14" fill="none"><path d="M1 1l6.500 6L1 13" stroke="#8d8d8d" strokeWidth="1.800" /></svg>
                  </button>
                ) : (
                  <span className="w-[21px]" />
                )}
                {s.bus ? <BusIcon /> : <BitIcon />}
                <span className={s.selected ? "-my-px flex h-[38px] w-[139px] items-center border border-[#5f80b8] pl-[2px]" : "pl-[3px]"}>{s.name}</span>
              </div>
            </td>
            <td className="bg-white p-0" />
            <td className="relative bg-black p-0">
              {s.selected ? (
                <input
                  aria-label={`${s.name} value`}
                  defaultValue={s.value}
                  className="-my-px ml-[3px] block h-[38px] w-[134px] border-2 border-[#5a93cb] bg-black pl-[4px] text-white outline-none"
                />
              ) : (
                <span className="pl-[9px]">{s.value}</span>
              )}
              {s.note === "SNR" && (
                <span className="absolute left-[63px] top-0 z-10 font-['Noto_Sans',sans-serif] text-[30px] leading-10 text-[#f3b544]">SNR</span>
              )}
              {s.note && s.note !== "SNR" && (
                <span className="absolute left-[22px] top-[7px] z-10 whitespace-nowrap font-['Noto_Sans_CJK_SC',sans-serif] text-[29px] leading-10 text-[#f3b544]">
                  {s.note}
                </span>
              )}
            </td>
          </tr>
        ))}
        <tr className="h-[29px]">
          <td className="bg-black p-0" />
          <td className="bg-white p-0" />
          <td className="bg-black p-0" />
        </tr>
      </tbody>
    </table>
  );
}

/* ---------- main window ---------- */
const TABS = [
  { name: "TOPS_16QAM.v", box: "w-[204px]", bar: true },
  { name: "T16QAM.v", box: "w-[152px]", bar: true },
  { name: "hw_ila_1", box: "w-[136px] bg-white text-black", bar: false },
  { name: "hw_vios", box: "w-[134px]", bar: true },
];

function Dashboard() {
  return (
    <main className="flex min-w-0 flex-1 flex-col border-l-4 border-t-[3px] border-[#4f7abf] bg-[#f6f6f6]">
      <nav className="flex h-[45px] bg-[#ececec] text-[18px] font-bold text-[#858585]">
        {TABS.map((t) => (
          <div key={t.name} className={`flex items-center pl-[6px] ${t.box}`}>
            <button className="font-bold">{t.name}</button>
            <button aria-label={`Close ${t.name}`} className="ml-auto mr-[6px]"><CloseX /></button>
            {t.bar ? <span className="h-10 w-[3px] bg-[#c6c6c6]" /> : <span className="w-[2px]" />}
          </div>
        ))}
      </nav>
      <div className="flex flex-1">
        <div className="flex pt-[2px]">
          <button className="flex h-[311px] w-[27px] items-center justify-end rounded-r-md border border-l-0 border-[#a8a8a8] bg-white text-[18px] leading-5">
            <span className="rotate-180 whitespace-nowrap [writing-mode:vertical-rl]">Dashboard Options</span>
          </button>
          <div className="ml-[7px] mr-1 flex flex-col pt-[11px] text-[18px] leading-5 text-[#6b6b6b]">
            <button className="flex h-[222px] w-[33px] items-center rounded-tr-md border border-l-0 border-[#a8a8a8] pl-1 pt-3">
              <span className="rotate-180 whitespace-nowrap [writing-mode:vertical-rl]">Trigger Setup - hw_ila_1</span>
            </button>
            <button className="-mt-px flex h-[222px] w-[33px] items-center rounded-r-md border border-l-0 border-[#a8a8a8] pl-1 pt-1">
              <span className="rotate-180 whitespace-nowrap [writing-mode:vertical-rl]">Capture Setup - hw_ila_1</span>
            </button>
          </div>
        </div>
        <section className="mt-3 min-w-0 flex-1 border-l-4 border-t-[5px] border-[#86e67e] bg-white">
          <h1 className="flex h-[45px] items-center bg-[#e6e6e6] pl-[5px] text-[19px] font-bold">Waveform - hw_ila_1</h1>
          <div className="h-[50px] border-b-[3px] border-[#e4e4e4]">
            <div className="grid h-[47px] w-[1158px] grid-cols-[repeat(22,minmax(0,1fr))] items-center">
              {TOOLS.map(([label, icon]) => (
                <button key={label} aria-label={label} className="flex h-[34px] items-center justify-center border-r-2 border-[#d9d9d9]">
                  <Icon>{icon}</Icon>
                </button>
              ))}
            </div>
          </div>
          <div className="flex">
            <div className="w-[439px] shrink-0">
              <div className="mb-[1px] flex h-[37px] items-center border border-[#b0b0b0] pl-[18px] pt-[2px] text-[18px]">
                <span className="whitespace-pre">ILA Status:  Idle</span>
              </div>
              <SignalTable />
            </div>
            <div className="ml-[6px] min-w-0 flex-1 overflow-hidden bg-black">
              <WaveCanvas />
            </div>
          </div>
        </section>
      </div>
    </main>
  );
}

function Watermarks() {
  return (
    <div
      aria-hidden="true"
      className="pointer-events-none absolute left-[180px] top-[142px] z-20 grid auto-rows-[487px] grid-cols-[repeat(6,201px)] font-['Liberation_Sans','Noto_Sans_CJK_SC',sans-serif] text-[31px] font-light leading-8 text-[#e8cdcf]"
    >
      {Array.from({ length: 18 }, (_, i) => (
        <span key={i} className="block h-8 origin-left -rotate-30 whitespace-nowrap">CSDN博客：我爱C编程</span>
      ))}
    </div>
  );
}

export default function App() {
  return (
    <div className="relative min-h-screen overflow-hidden bg-white font-['Liberation_Sans',Arial,sans-serif] text-black">
      <div className="flex pl-[113px] pr-[114px] pt-9">
        <aside className="mr-5 flex w-[190px] shrink-0 flex-col gap-[21px]">
          <HardwarePanel />
          <PropertiesPanel />
        </aside>
        <Dashboard />
      </div>
      <Watermarks />
      <p className="absolute bottom-2 right-0 whitespace-nowrap font-['Noto_Sans_CJK_SC',sans-serif] text-[44px] font-light leading-[66px] text-[#dedede] [text-shadow:1px_1px_1px_#a5a5a5]">
        CSDN @我爱C编程
      </p>
    </div>
  );
}
